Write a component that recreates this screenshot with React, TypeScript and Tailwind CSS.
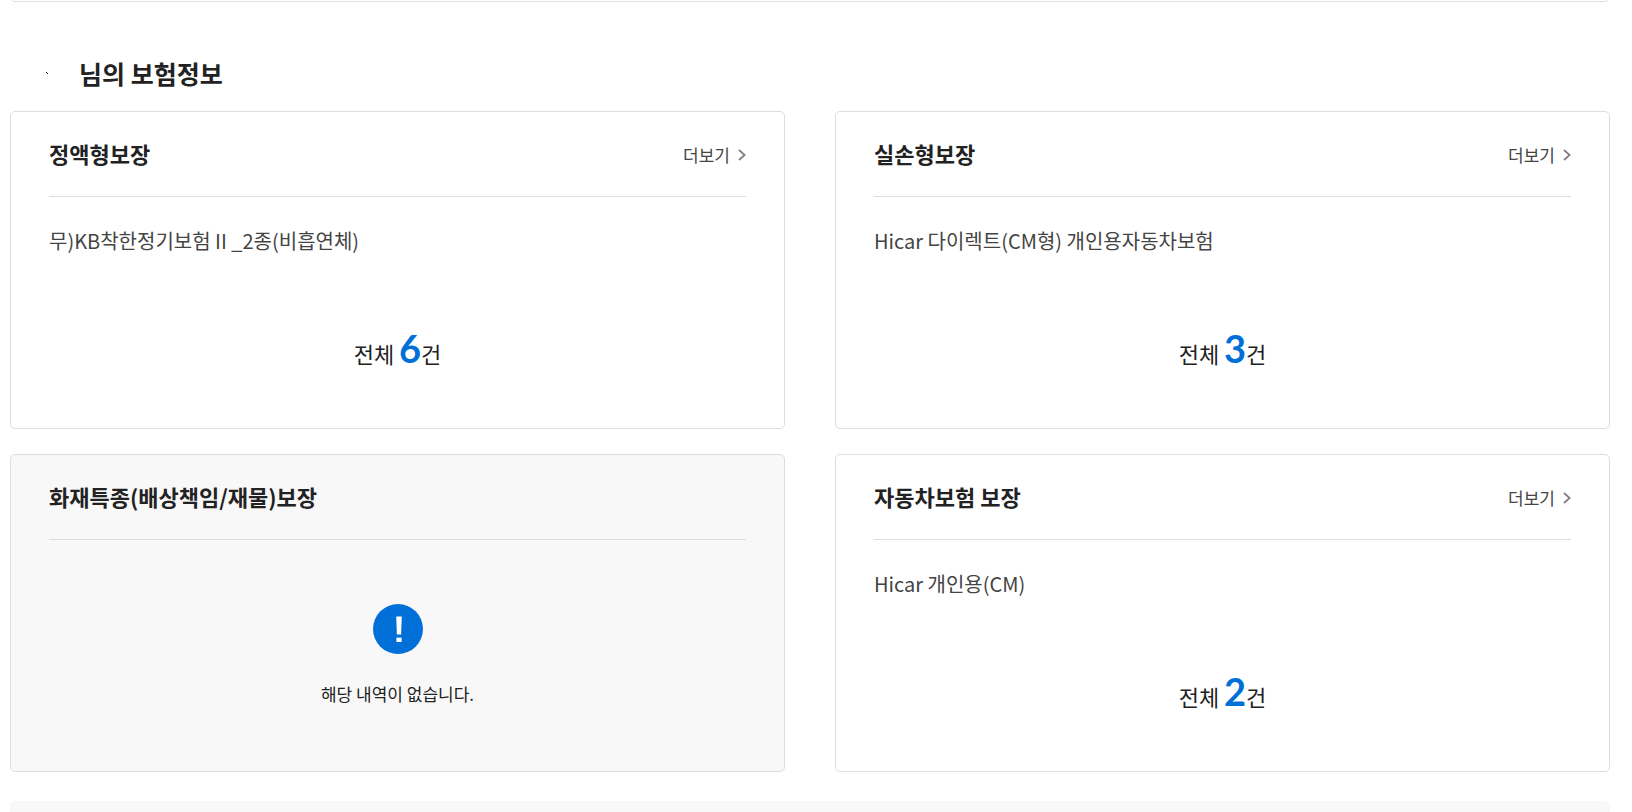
type Coverage = {
  title: string;
  product?: string;
  count: number;
};

const coverages: Coverage[] = [
  { title: "정액형보장", product: "무)KB착한정기보험 II _2종(비흡연체)", count: 6 },
  { title: "실손형보장", product: "Hicar 다이렉트(CM형) 개인용자동차보험", count: 3 },
  { title: "화재특종(배상책임/재물)보장", count: 0 },
  { title: "자동차보험 보장", product: "Hicar 개인용(CM)", count: 2 },
];

function ChevronIcon() {
  return (
    <svg width="8" height="12" viewBox="0 0 8 12" fill="none" aria-hidden="true">
      <path d="M1 1L6.6 6L1 11" stroke="#808080" strokeWidth="1.8" />
    </svg>
  );
}

function NoticeIcon() {
  return (
    <svg width="50" height="50" viewBox="0 0 50 50" aria-hidden="true">
      <circle cx="25" cy="25" r="25" fill="#0070d8" />
      <path d="M23.2 12.5h5.6l-0.7 18h-4.2z" fill="#fff" />
      <path d="M23.4 33.6h5.2v4.4h-5.2z" fill="#fff" />
    </svg>
  );
}

function CoverageCard({ title, product, count }: Coverage) {
  const empty = count === 0;
  return (
    <section
      className={
        empty
          ? "flex min-h-[318px] flex-col rounded-[5px] border border-[#ddd] bg-[#f8f8f8] px-[38px]"
          : "flex min-h-[318px] flex-col rounded-[5px] border border-[#ddd] bg-white px-[38px]"
      }
    >
      <header className="flex h-[85px] items-start justify-between border-b border-[#ddd] pt-6">
        <h3 className="text-[22px] leading-[34px] font-bold">{title}</h3>
        {!empty && (
          <a href="#" className="flex items-center gap-2 text-[17px] leading-[38px] text-[#444]">
            더보기
            <ChevronIcon />
          </a>
        )}
      </header>
      {empty ? (
        <div className="flex flex-col items-center pt-16">
          <NoticeIcon />
          <p className="mt-7 text-[17px] leading-6">해당 내역이 없습니다.</p>
        </div>
      ) : (
        <>
          <p className="mt-7 text-[20px] leading-8 text-[#444]">{product}</p>
          <p className="mt-16 text-center text-[22px] leading-[54px]">
            전체{" "}
            <strong className="font-['Lato','Noto_Sans_CJK_KR',sans-serif] text-[38px] font-bold text-[#0070d8]">
              {count}
            </strong>
            건
          </p>
        </>
      )}
    </section>
  );
}

export default function App() {
  return (
    <main className="h-screen overflow-hidden bg-white pr-[22px] pl-[10px] font-['Noto_Sans_CJK_KR',sans-serif] text-[#222]">
      <div className="flex h-[2px] flex-col justify-end overflow-hidden">
        <div className="h-10 shrink-0 rounded-[5px] border border-[#ddd]" />
      </div>
      <div className="flex h-[109px] items-center pt-[35px] pb-[2px] pl-9">
        <svg width="2" height="2" viewBox="0 0 2 2" aria-hidden="true">
          <path d="M0 0h1v1h1v1h-1v-1h-1z" fill="#222" />
        </svg>
        <h2 className="ml-[31px] text-[25px] leading-9 font-bold">님의 보험정보</h2>
      </div>
      <div className="grid grid-cols-2 gap-x-[50px] gap-y-[25px]">
        {coverages.map((coverage) => (
          <CoverageCard key={coverage.title} {...coverage} />
        ))}
      </div>
      <div className="mt-[29px] h-40 rounded-[5px] bg-[#f8f8f8]" />
    </main>
  );
}
